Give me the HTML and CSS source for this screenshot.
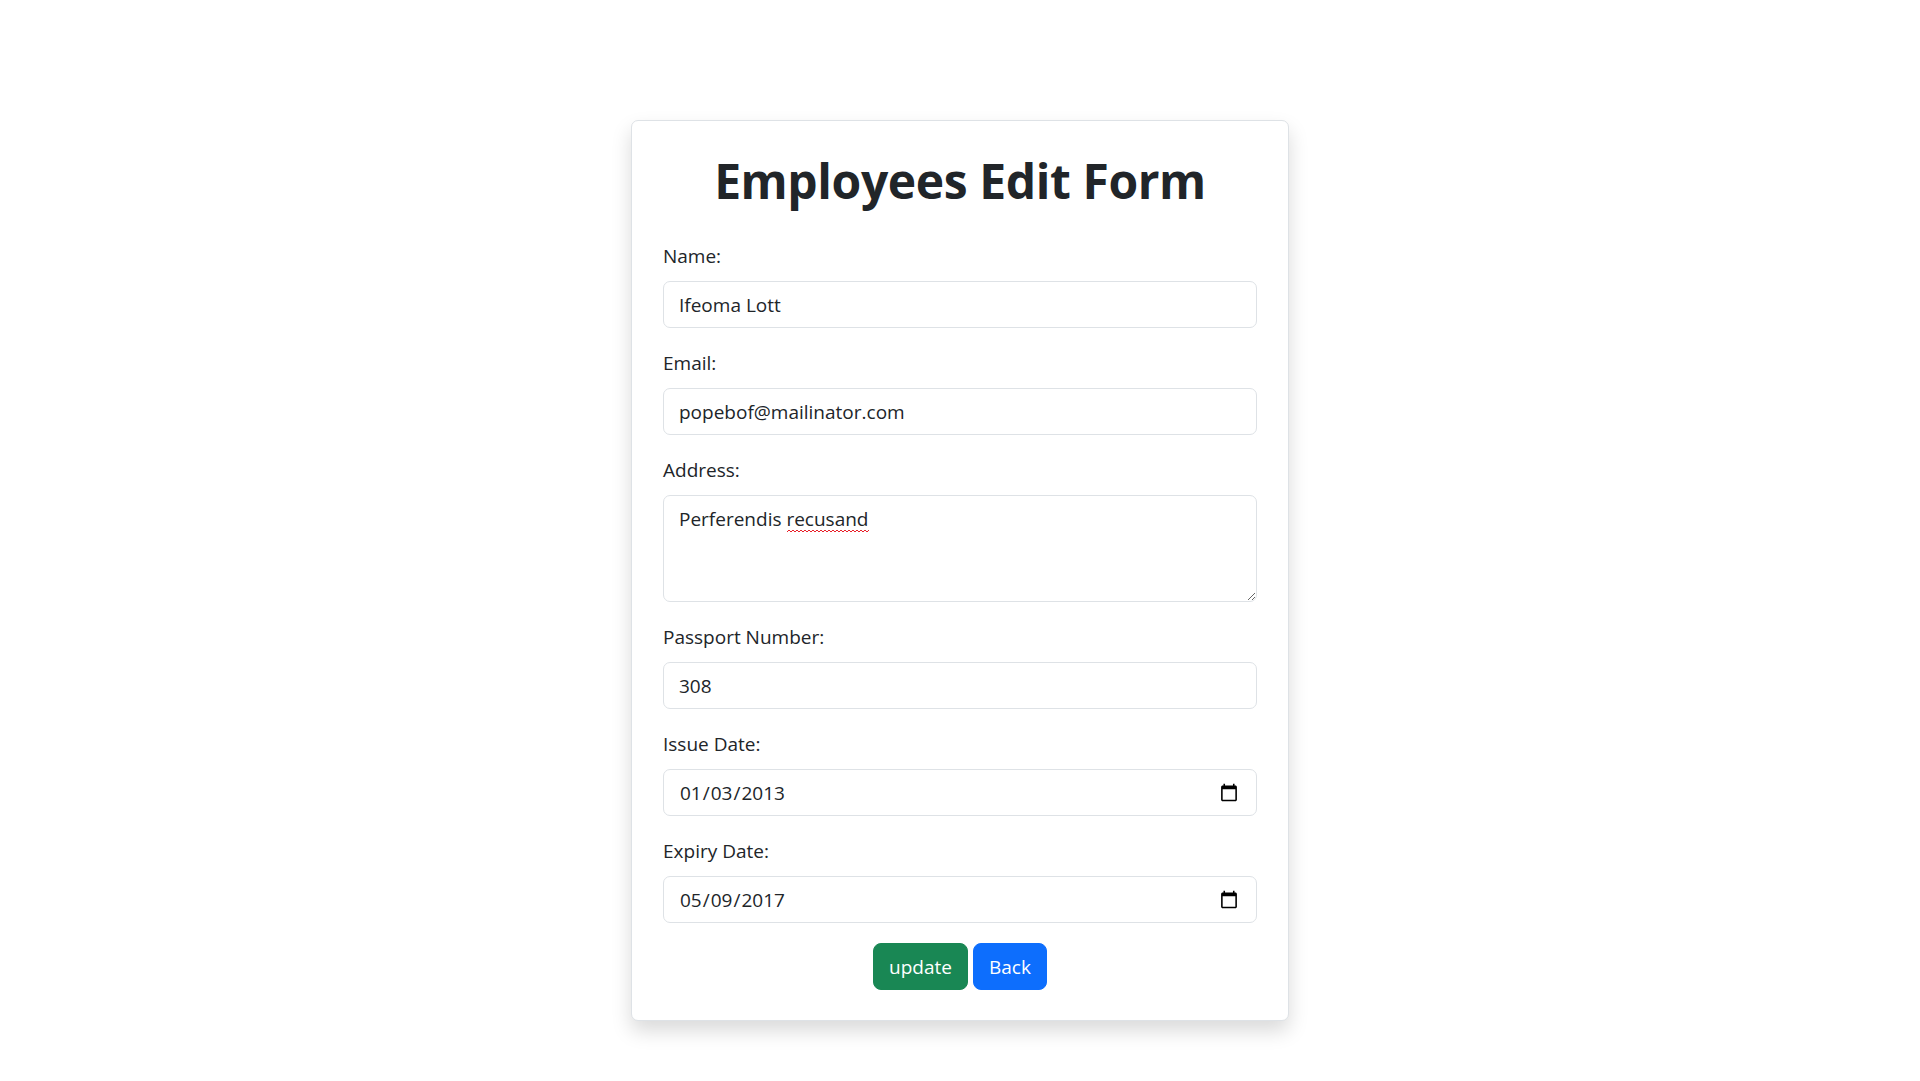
FILE: index.html
```html
<!DOCTYPE html>
<html lang="en">
<head>
<meta charset="utf-8">
<title>Employees Edit Form</title>
<link rel="stylesheet" href="styles.css">
</head>
<body>
<main class="page">
  <form class="card">
    <h1 class="title">Employees Edit Form</h1>
    <div class="group">
      <label class="label" for="name">Name:</label>
      <input class="control" id="name" type="text" value="Ifeoma Lott">
    </div>
    <div class="group">
      <label class="label" for="email">Email:</label>
      <input class="control" id="email" type="email" value="popebof@mailinator.com">
    </div>
    <div class="group">
      <label class="label" for="address">Address:</label>
      <div class="area-wrap">
        <textarea class="control area" id="address" rows="3" spellcheck="false">Perferendis recusand</textarea>
        <svg class="squiggle" width="82" height="4" viewBox="0 0 82 4" aria-hidden="true">
          <path d="M0 3 L2 1 L4 3 L6 1 L8 3 L10 1 L12 3 L14 1 L16 3 L18 1 L20 3 L22 1 L24 3 L26 1 L28 3 L30 1 L32 3 L34 1 L36 3 L38 1 L40 3 L42 1 L44 3 L46 1 L48 3 L50 1 L52 3 L54 1 L56 3 L58 1 L60 3 L62 1 L64 3 L66 1 L68 3 L70 1 L72 3 L74 1 L76 3 L78 1 L80 3 L82 1" fill="none" stroke="#e8202a" stroke-width="1"/>
        </svg>
      </div>
    </div>
    <div class="group">
      <label class="label" for="passport">Passport Number:</label>
      <input class="control" id="passport" type="text" value="308">
    </div>
    <div class="group">
      <label class="label" for="issue">Issue Date:</label>
      <input class="control" id="issue" type="date" value="2013-01-03">
    </div>
    <div class="group">
      <label class="label" for="expiry">Expiry Date:</label>
      <input class="control" id="expiry" type="date" value="2017-05-09">
    </div>
    <div class="actions">
      <button class="btn btn-green" type="submit">update</button>
      <button class="btn btn-blue" type="button">Back</button>
    </div>
  </form>
</main>
</body>
</html>
```

FILE: styles.css
```css
html, body {
  margin: 0;
  padding: 0;
  background: #ffffff;
}

body {
  min-height: 1081px;
  font-family: "Open Sans", "Noto Sans", "Liberation Sans", sans-serif;
  font-size: 19px;
  line-height: 30px;
  color: #212529;
}

.page {
  display: flex;
  justify-content: center;
  padding-top: 120px;
  padding-bottom: 61px;
}

.card {
  box-sizing: border-box;
  width: 658px;
  padding: 30px 31px 30px;
  border: 1px solid #dee2e6;
  border-radius: 7px;
  background: #fff;
  box-shadow: 0 10px 20px rgba(0, 0, 0, 0.15);
  display: flex;
  flex-direction: column;
}

.title {
  margin: 0 0 30px;
  text-align: center;
  font-size: 48px;
  line-height: 60px;
  font-weight: 700;
  letter-spacing: -0.4px;
  color: #212529;
}

.group {
  display: flex;
  flex-direction: column;
  margin-bottom: 20px;
}

.label {
  display: block;
  margin-bottom: 10px;
}

.control {
  box-sizing: border-box;
  width: 100%;
  height: 47px;
  padding: 7.5px 15px;
  font: inherit;
  color: #212529;
  background: #fff;
  border: 1px solid #dee2e6;
  border-radius: 7px;
  outline: none;
  margin: 0;
  display: block;
}

.area-wrap {
  position: relative;
}

.area {
  height: 107px;
  resize: vertical;
}

.squiggle {
  position: absolute;
  left: 124px;
  top: 34px;
  pointer-events: none;
}

.control::-webkit-calendar-picker-indicator {
  width: 20px;
  height: 20px;
  margin-right: 0;
}

.actions {
  display: flex;
  justify-content: center;
  gap: 5px;
}

.btn {
  height: 47px;
  padding: 7.5px 15px;
  font: inherit;
  font-size: 19px;
  border: 1px solid transparent;
  border-radius: 8px;
  color: #fff;
  cursor: pointer;
}

.btn-green {
  background: #198754;
  border-color: #198754;
}

.btn-blue {
  background: #0d6efd;
  border-color: #0d6efd;
}
```
